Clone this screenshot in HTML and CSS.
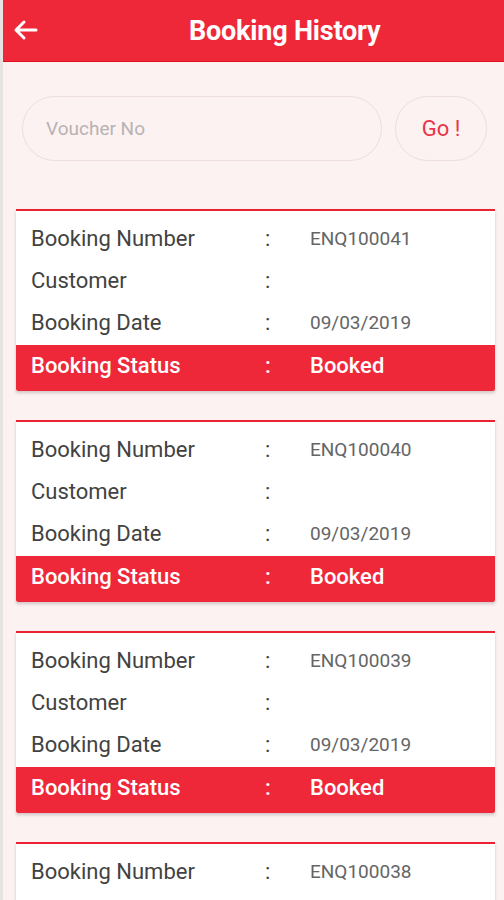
FILE: index.html
```html
<!DOCTYPE html>
<html>
<head>
<meta charset="utf-8">
<link rel="stylesheet" href="styles.css">
</head>
<body>
<div class="app">
  <header class="topbar">
    <svg class="back" width="26" height="22" viewBox="0 0 26 22"><path d="M24 11H4M12 3L4 11L12 19" fill="none" stroke="#fff" stroke-width="3" stroke-linecap="round" stroke-linejoin="round"/></svg>
    <h1 class="title">Booking History</h1>
  </header>
  <div class="search">
    <div class="input">Voucher No</div>
    <div class="go">Go !</div>
  </div>
  <div class="list">
    <div class="card">
      <div class="row"><span class="lbl">Booking Number</span><span class="col">:</span><span class="val">ENQ100041</span></div>
      <div class="row"><span class="lbl">Customer</span><span class="col">:</span><span class="val"></span></div>
      <div class="row"><span class="lbl">Booking Date</span><span class="col">:</span><span class="val">09/03/2019</span></div>
      <div class="row status"><span class="lbl">Booking Status</span><span class="col">:</span><span class="val">Booked</span></div>
    </div>
    <div class="card">
      <div class="row"><span class="lbl">Booking Number</span><span class="col">:</span><span class="val">ENQ100040</span></div>
      <div class="row"><span class="lbl">Customer</span><span class="col">:</span><span class="val"></span></div>
      <div class="row"><span class="lbl">Booking Date</span><span class="col">:</span><span class="val">09/03/2019</span></div>
      <div class="row status"><span class="lbl">Booking Status</span><span class="col">:</span><span class="val">Booked</span></div>
    </div>
    <div class="card">
      <div class="row"><span class="lbl">Booking Number</span><span class="col">:</span><span class="val">ENQ100039</span></div>
      <div class="row"><span class="lbl">Customer</span><span class="col">:</span><span class="val"></span></div>
      <div class="row"><span class="lbl">Booking Date</span><span class="col">:</span><span class="val">09/03/2019</span></div>
      <div class="row status"><span class="lbl">Booking Status</span><span class="col">:</span><span class="val">Booked</span></div>
    </div>
    <div class="card">
      <div class="row"><span class="lbl">Booking Number</span><span class="col">:</span><span class="val">ENQ100038</span></div>
      <div class="row"><span class="lbl">Customer</span><span class="col">:</span><span class="val"></span></div>
      <div class="row"><span class="lbl">Booking Date</span><span class="col">:</span><span class="val">09/03/2019</span></div>
      <div class="row status"><span class="lbl">Booking Status</span><span class="col">:</span><span class="val">Booked</span></div>
    </div>
  </div>
</div>
</body>
</html>
```
FILE: styles.css
```css
* { box-sizing: border-box; }
html, body { margin: 0; padding: 0; }
body {
  font-family: Roboto, "Liberation Sans", sans-serif;
  background: #fdf2f2;
  height: 900px;
  overflow: hidden;
}
.app {
  border-left: 3px solid #e7e3e3;
  height: 900px;
  overflow: hidden;
  background: #fdf2f2;
}
.topbar {
  height: 62px;
  background: #ef2839;
  border-bottom: 1px solid #e0101f;
  display: flex;
  align-items: center;
  padding-left: 9px;
}
.back { display: block; margin-top: -1px; }
.title {
  margin: 0 0 0 151px;
  color: #fff;
  font-size: 27px;
  font-weight: 700;
  letter-spacing: -0.2px;
}
.search {
  display: flex;
  gap: 13px;
  padding: 34px 14px 0 19px;
}
.input {
  flex: 0 0 360px;
  height: 65px;
  border: 1.5px solid #eddddd;
  border-radius: 33px;
  display: flex;
  align-items: center;
  padding-left: 23px;
  color: #b7b3b3;
  font-size: 19px;
}
.go {
  flex: 0 0 92px;
  height: 65px;
  border: 1.5px solid #eddddd;
  border-radius: 33px;
  display: flex;
  align-items: center;
  justify-content: center;
  color: #ea3448;
  font-size: 22px;
}
.list {
  padding: 48px 9px 0 13px;
  display: flex;
  flex-direction: column;
  gap: 29px;
}
.card {
  background: #fff;
  border-top: 2px solid #ea2232;
  padding-top: 6px;
  box-shadow: 0 2px 3px rgba(0,0,0,0.18);
}
.row {
  display: grid;
  grid-template-columns: 234px 45px 1fr;
  height: 42px;
  align-items: center;
  padding-left: 15px;
  color: #424242;
  font-size: 22px;
}
.row .val {
  font-size: 19px;
  color: #656565;
}
.row.status {
  background: #ef2839;
  color: #fff;
  height: 46px;
  margin-top: 2px;
  font-weight: 500;
  padding-bottom: 6px;
  border-radius: 0 0 2px 2px;
}
.row.status .val {
  color: #fff;
  font-size: 22px;
}
```
